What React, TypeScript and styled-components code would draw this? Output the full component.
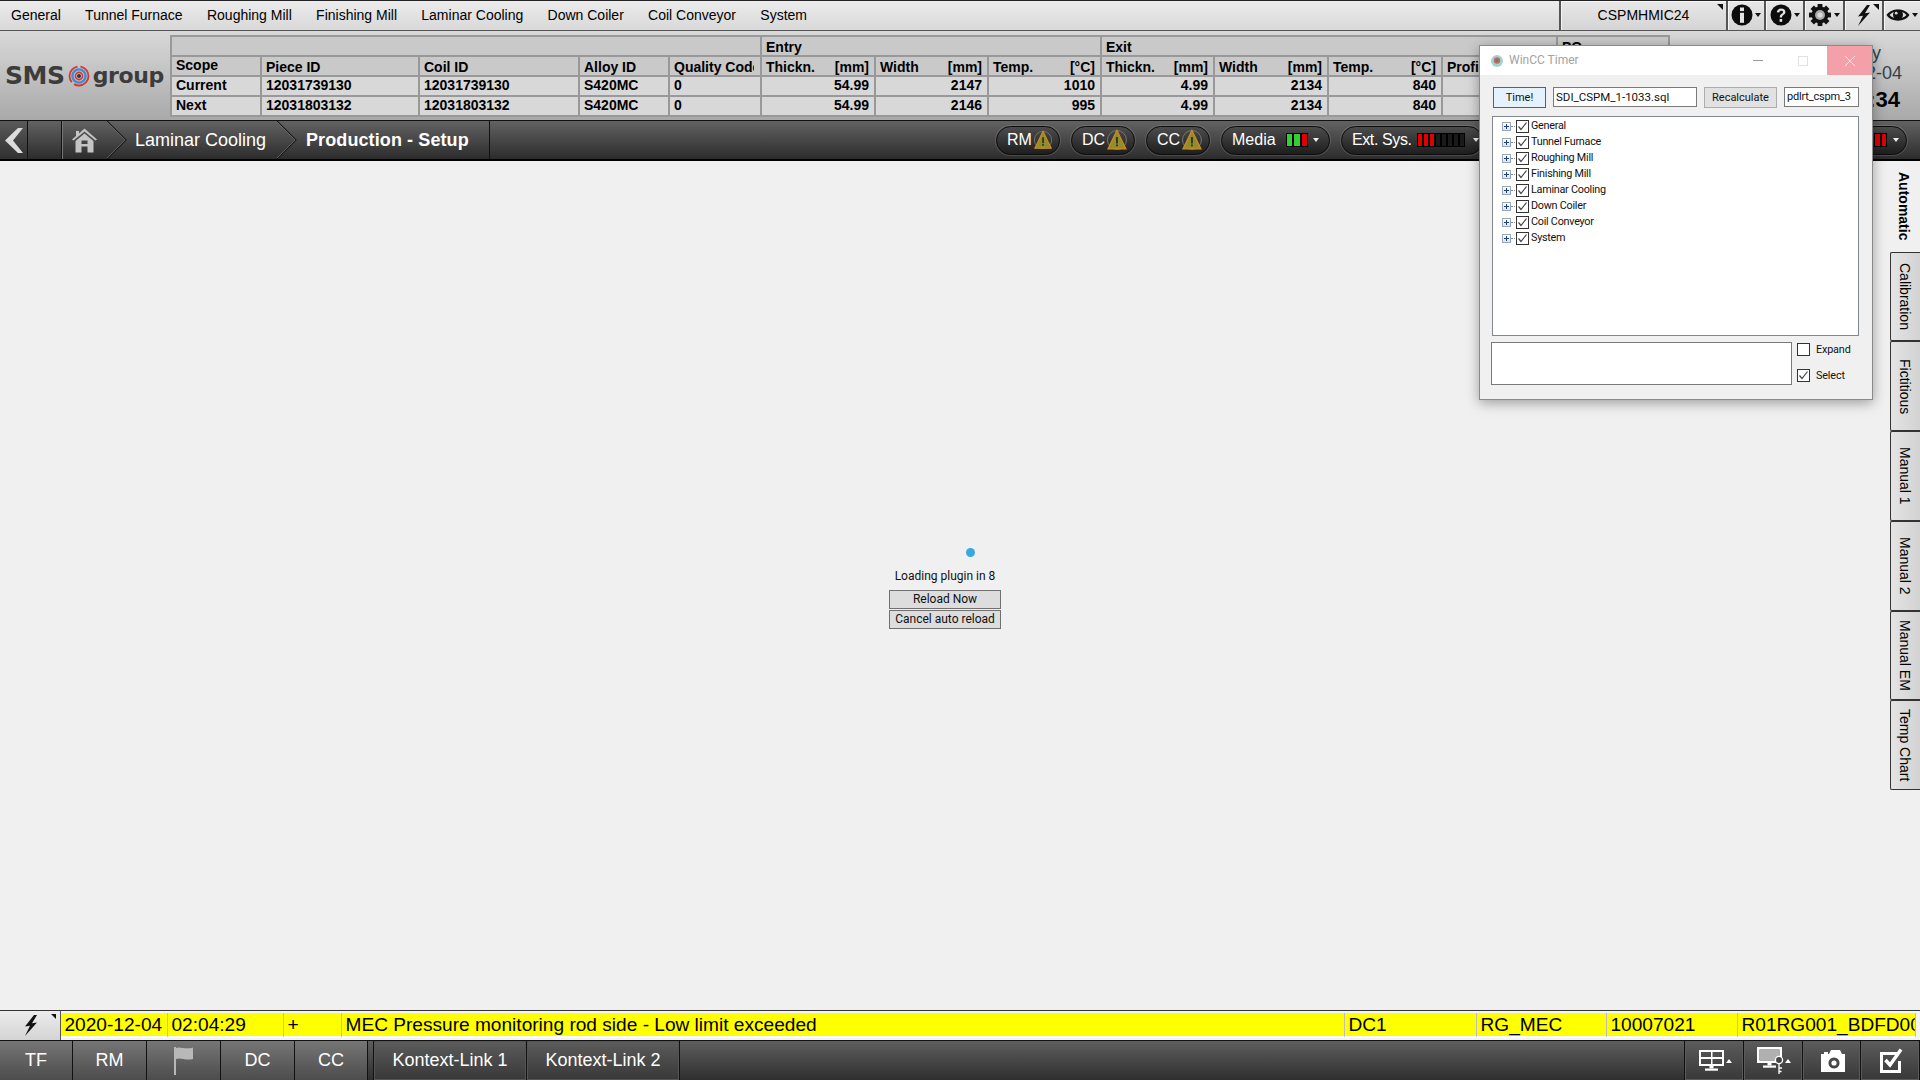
import React from "react"
import styled, { createGlobalStyle } from "styled-components"

const GlobalStyle = createGlobalStyle`
    html, body { margin: 0; padding: 0; background: #f0f0f0; }
    * { box-sizing: border-box; }
`

const Page = styled.div`
    position: relative;
    width: 1920px;
    height: 1080px;
    overflow: hidden;
    display: flex;
    flex-direction: column;
    font-family: "Liberation Sans", Arial, sans-serif;
    color: #000;
`

/* top menu */
const TopMenu = styled.div`
    height: 31px;
    flex: none;
    display: flex;
    align-items: stretch;
    border-top: 1px solid #222;
    border-bottom: 1px solid #555;
    background: linear-gradient(#ececec, #d8d8d8);
`
const MenuItems = styled.nav`
    flex: 1;
    display: flex;
    align-items: center;
    gap: 24.3px;
    padding: 0 0 2px 11px;
    font-size: 14px;
`
const MenuCell = styled.div<{ $w: number; $corner?: boolean }>`
    position: relative;
    width: ${p => p.$w}px;
    display: flex;
    align-items: center;
    justify-content: center;
    gap: 2px;
    padding-bottom: 1px;
    font-size: 14px;
    border-left: 2px solid #555;
    background: linear-gradient(#e8e8e8, #d4d4d4);
    box-shadow: inset 1px 1px 0 #f6f6f6;
    ${p => p.$corner && `
        &::after {
            content: "";
            position: absolute;
            top: 3px;
            right: 3px;
            border-top: 6px solid #111;
            border-left: 6px solid transparent;
        }
    `}
`
const Caret = styled.span<{ $color?: string; $up?: boolean; $pull?: number }>`
    display: inline-block;
    width: 0;
    height: 0;
    margin-left: ${p => p.$pull || 0}px;
    border-left: 3.5px solid transparent;
    border-right: 3.5px solid transparent;
    ${p => p.$up
        ? `border-bottom: 4px solid ${p.$color || "#111"};`
        : `border-top: 4px solid ${p.$color || "#111"};`}
`

/* header with logo, order table and clock */
const Header = styled.header`
    height: 89px;
    flex: none;
    display: flex;
    background: linear-gradient(#d9d9d9, #a9a9a9);
`
const Logo = styled.div`
    width: 170px;
    flex: none;
    display: flex;
    align-items: center;
    gap: 3px;
    padding: 0 0 0 5px;
    font-family: "DejaVu Sans", sans-serif;
    font-weight: 700;
    color: #3c3c3c;
`
const LogoWord = styled.span<{ $size: number }>`
    font-size: ${p => p.$size}px;
    letter-spacing: -0.4px;
`
const OrderTable = styled.table`
    table-layout: fixed;
    width: 1498px;
    height: 79px;
    margin-top: 4px;
    border-collapse: collapse;
    font-size: 14px;
    font-weight: 700;
`
const Col = styled.col<{ $w: number }>`
    width: ${p => p.$w}px;
`
const HeadCell = styled.th`
    height: 20px;
    padding: 0 4px;
    text-align: left;
    font-weight: 700;
    background: #c9c9c9;
    border: 2px solid #999;
    overflow: hidden;
    white-space: nowrap;
`
const GroupLabel = styled.div`
    padding-top: 2px;
`
const ScopeLabel = styled.div`
    padding-bottom: 2px;
`
const UnitHead = styled.div`
    display: flex;
    justify-content: space-between;
    padding: 2px 1px 0 0;
`
const LabelHead = styled.div`
    padding-top: 2px;
    margin-right: 2px;
    overflow: hidden;
`
const DataCell = styled.td<{ $right?: boolean }>`
    height: 20px;
    padding: 0 ${p => (p.$right ? 5 : 4)}px 2px 4px;
    background: #d8d8d8;
    border: 2px solid #999;
    text-align: ${p => (p.$right ? "right" : "left")};
    white-space: nowrap;
`
const Clock = styled.div`
    margin-left: auto;
    padding: 12px 18px 0 0;
    text-align: center;
    font-size: 18px;
    line-height: 20px;
    color: #34404c;
`
const ClockTime = styled.div`
    font-size: 22px;
    font-weight: 700;
    line-height: 34px;
    color: #000;
`

/* breadcrumb bar */
const NavBar = styled.div`
    height: 41px;
    flex: none;
    display: flex;
    align-items: stretch;
    border-top: 1px solid #111;
    border-bottom: 2px solid #000;
    background: linear-gradient(#626262, #2c2c2c);
    color: #fff;
    font-size: 18px;
`
const BackCell = styled.div`
    width: 28px;
    display: flex;
    align-items: center;
    padding-left: 5px;
    border-right: 1px solid #111;
    background: linear-gradient(#5a5a5a, #303030);
`
const BlankCell = styled.div`
    width: 34px;
    border-right: 1px solid #111;
`
const HomeCell = styled.div`
    width: 45px;
    display: flex;
    align-items: center;
    padding-left: 9px;
    border-left: 1px solid #777;
`
const Crumb = styled.div<{ $bold?: boolean; $w: number }>`
    width: ${p => p.$w}px;
    display: flex;
    align-items: center;
    padding-left: ${p => (p.$bold ? 9 : 8)}px;
    font-weight: ${p => (p.$bold ? 700 : 400)};
    letter-spacing: ${p => (p.$bold ? 0.1 : 0)}px;
    white-space: nowrap;
`
const CrumbEnd = styled.div`
    width: 1px;
    background: #111;
`
const Pills = styled.div`
    margin-left: auto;
    display: flex;
    align-items: center;
    gap: 11px;
    padding-right: 13px;
    font-size: 16px;
`
const Pill = styled.div<{ $w: number }>`
    width: ${p => p.$w}px;
    height: 29px;
    display: flex;
    align-items: center;
    padding: 0 7px 0 10px;
    gap: 2px;
    border: 1px solid #0c0c0c;
    border-radius: 15px;
    background: linear-gradient(#4c4c4c, #1e1e1e);
    box-shadow: 0 0 0 1px rgba(255, 255, 255, 0.12);
    white-space: nowrap;
`
const PillLabel = styled.span<{ $track?: number }>`
    letter-spacing: ${p => p.$track || 0}px;
`
const Leds = styled.div<{ $gap: number; $after: number }>`
    display: flex;
    margin-left: ${p => p.$gap}px;
    margin-right: ${p => p.$after}px;
`
const EndLeds = styled(Leds)`
    margin-left: auto;
`
const Led = styled.span<{ $color: string; $w: number }>`
    width: ${p => p.$w}px;
    height: 14px;
    background: ${p => p.$color};
    border: 1px solid #000;
`

/* main area */
const Body = styled.div`
    flex: 1;
    display: flex;
    min-height: 0;
    background: #f0f0f0;
`
const Content = styled.main`
    flex: 1;
    display: flex;
    flex-direction: column;
    align-items: center;
    justify-content: center;
    padding-top: 6px;
    font-family: Roboto, "Liberation Sans", sans-serif;
    font-size: 12px;
    color: #111;
`
const Dot = styled.div`
    width: 9px;
    height: 9px;
    margin-left: 50px;
    margin-bottom: 11px;
    border-radius: 50%;
    background: #38a8e0;
`
const PluginText = styled.div`
    line-height: 16px;
    margin-bottom: 6px;
`
const PluginButton = styled.button`
    display: block;
    width: 112px;
    height: 19px;
    padding: 0;
    margin: 0 0 1px;
    font: inherit;
    color: #111;
    background: #dddddd;
    border: 1px solid #707070;
`
const SideTabs = styled.aside`
    width: 30px;
    flex: none;
    display: flex;
    flex-direction: column;
`
const SideTab = styled.div<{ $active?: boolean }>`
    height: ${p => (p.$active ? 90.5 : 89.8)}px;
    display: flex;
    align-items: center;
    justify-content: center;
    padding-right: 2px;
    writing-mode: vertical-rl;
    font-size: 14px;
    font-weight: ${p => (p.$active ? 700 : 400)};
    ${p => !p.$active && `
        border: 1px solid #333;
        border-right: 0;
        border-radius: 2px 0 0 2px;
        background: linear-gradient(90deg, #e4e4e4, #d2d2d2);
    `}
`

/* alarm line */
const AlarmRow = styled.div`
    height: 30px;
    flex: none;
    display: grid;
    grid-template-columns: 61px 107px 116px 58px 1003px 132px 130px 131px 182px;
    border-top: 1px solid #333;
    background: #f4f4f4;
`
const AlarmBolt = styled.div`
    position: relative;
    display: flex;
    align-items: center;
    justify-content: center;
    background: linear-gradient(#ececec, #d4d4d4);
    border-right: 1px solid #555;
    &::after {
        content: "";
        position: absolute;
        top: 3px;
        right: 4px;
        border-top: 5px solid #111;
        border-left: 5px solid transparent;
    }
`
const AlarmCell = styled.div`
    margin: 2px 0 2px;
    padding-left: 3.5px;
    border-right: 1px solid #bdbdbd;
    border-bottom: 2px solid #fff;
    background: #ffff00;
    font-size: 19.1px;
    line-height: 23px;
    overflow: hidden;
    white-space: nowrap;
    &:last-child {
        margin-right: 4px;
    }
`

/* bottom bar */
const BottomBar = styled.footer`
    height: 40px;
    flex: none;
    display: flex;
    border-top: 1px solid #111;
    background: linear-gradient(#5e5e5e, #2f2f2f);
    color: #fff;
    font-size: 18px;
`
const PlantButton = styled.div<{ $w: number }>`
    width: ${p => p.$w}px;
    display: flex;
    align-items: center;
    justify-content: center;
    border-right: 1px solid #111;
    background: linear-gradient(#767676, #4c4c4c);
`
const LinkGroup = styled.div`
    display: flex;
    margin-left: 5px;
    border-left: 1px solid #111;
`
const LinkButton = styled.div<{ $w: number }>`
    width: ${p => p.$w}px;
    display: flex;
    align-items: center;
    justify-content: center;
    border-right: 1px solid #111;
    background: linear-gradient(#5c5c5c, #383838);
    box-shadow: inset 0 0 0 1px #555;
`
const ToolGroup = styled.div`
    margin-left: auto;
    display: flex;
    border-left: 1px solid #111;
`
const ToolButton = styled.div`
    width: 58.7px;
    display: flex;
    align-items: center;
    justify-content: center;
    gap: 2px;
    padding-left: 3px;
    border-right: 1px solid #111;
    background: linear-gradient(#5c5c5c, #383838);
    box-shadow: inset 0 0 0 1px #5a5a5a;
`

/* floating dialog */
const Dialog = styled.section`
    position: absolute;
    left: 1479px;
    top: 45px;
    width: 394px;
    height: 355px;
    display: flex;
    flex-direction: column;
    background: #f0f0f0;
    border: 1px solid #8a8a8a;
    box-shadow: 0 3px 12px rgba(0, 0, 0, 0.35);
    font-family: Roboto, "Liberation Sans", sans-serif;
    font-size: 11px;
    color: #111;
`
const TitleBar = styled.div`
    height: 29px;
    flex: none;
    display: flex;
    align-items: center;
    gap: 5px;
    padding-left: 10px;
    background: #fff;
    color: #a2a2a2;
    font-size: 12px;
`
const TitleText = styled.span`
    padding-bottom: 2px;
`
const WindowButtons = styled.div`
    margin-left: auto;
    align-self: stretch;
    display: flex;
    align-items: center;
`
const MinLine = styled.div`
    width: 10px;
    height: 1px;
    margin-right: 35px;
    background: #9a9a9a;
`
const MaxBox = styled.div`
    width: 10px;
    height: 10px;
    margin-right: 19px;
    border: 1px solid #e2e2e2;
`
const CloseButton = styled.div`
    align-self: stretch;
    width: 45px;
    display: flex;
    align-items: center;
    justify-content: center;
    background: #f4a0a8;
`
const ToolRow = styled.div`
    display: flex;
    align-items: flex-start;
    padding: 12px 12px 0 13px;
    gap: 7px;
`
const ActionButton = styled.button<{ $w: number; $primary?: boolean }>`
    width: ${p => p.$w}px;
    height: 21px;
    padding: 0;
    font: inherit;
    color: #111;
    background: ${p => (p.$primary ? "#e5f1fb" : "#e1e1e1")};
    border: 1px solid ${p => (p.$primary ? "#0078d7" : "#adadad")};
`
const TextBox = styled.div<{ $w: number; $size: number; $track?: number }>`
    width: ${p => p.$w}px;
    height: 20px;
    padding-left: 2px;
    line-height: 18px;
    font-size: ${p => p.$size}px;
    letter-spacing: ${p => p.$track || 0}px;
    background: #fff;
    border: 1px solid #7a7a7a;
    white-space: nowrap;
    overflow: hidden;
`
const TreeView = styled.div`
    height: 220px;
    margin: 8px 13px 0 12px;
    padding: 1px 0 0 9px;
    background: #fff;
    border: 1px solid #828790;
    font-size: 10.8px;
    letter-spacing: -0.25px;
`
const TreeRow = styled.div`
    height: 16px;
    display: flex;
    align-items: center;
    line-height: 16px;
`
const PlusBox = styled.span`
    position: relative;
    width: 9px;
    height: 9px;
    flex: none;
    border: 1px solid #9aa5b5;
    background: linear-gradient(#fff, #dfe3ea);
    margin-right: 5px;
    &::before {
        content: "";
        position: absolute;
        left: 1px;
        top: 3px;
        width: 5px;
        height: 1px;
        background: #1a3f8a;
    }
    &::after {
        content: "";
        position: absolute;
        left: 3px;
        top: 1px;
        width: 1px;
        height: 5px;
        background: #1a3f8a;
    }
`
const TreeDots = styled.span`
    width: 6px;
    margin-left: -5px;
    margin-right: -1px;
    border-top: 1px dotted #888;
`
const CheckBox = styled.span`
    width: 13px;
    height: 13px;
    flex: none;
    display: inline-flex;
    align-items: center;
    justify-content: center;
    background: #fff;
    border: 1px solid #333;
`
const TreeLabel = styled.span`
    margin-left: 2px;
`
const BottomRow = styled.div`
    display: flex;
    gap: 5px;
    margin: 6px 0 0 11px;
`
const NoteBox = styled.div`
    width: 301px;
    height: 43px;
    background: #fff;
    border: 1px solid #7a7a7a;
`
const Options = styled.div`
    display: flex;
    flex-direction: column;
    gap: 13px;
    padding-top: 1px;
    font-size: 10.8px;
    letter-spacing: -0.15px;
`
const OptionRow = styled.label`
    display: flex;
    align-items: center;
    gap: 6px;
    height: 13px;
`

const SwirlLogo = () => (
    <svg width="22" height="22" viewBox="0 0 22 22">
        <circle cx="11" cy="11" r="9.5" fill="none" stroke="#d8333a" strokeWidth="1.8" strokeDasharray="20 3" />
        <circle cx="11" cy="11" r="6.6" fill="none" stroke="#3d8fd0" strokeWidth="2.4" />
        <circle cx="11" cy="11" r="3.6" fill="none" stroke="#d8333a" strokeWidth="1.6" />
        <circle cx="11" cy="11" r="2" fill="#333" />
    </svg>
)

const Check = () => (
    <svg width="11" height="11" viewBox="0 0 11 11">
        <path d="M1.5 5.5 L4 8.5 L9.5 1.5" fill="none" stroke="#444" strokeWidth="1.2" />
    </svg>
)

const Bolt = () => (
    <svg width="15" height="21" viewBox="0 0 15 21">
        <path d="M11 0 L2 11.5 L7 10.8 L2 21 L14 7.5 L9 8.2 L14 0 Z" fill="#111" />
    </svg>
)

const InfoIcon = () => (
    <svg width="22" height="22" viewBox="0 0 22 22">
        <circle cx="11" cy="11" r="10.5" fill="#0c0c0c" />
        <rect x="9" y="3.5" width="4" height="3.6" fill="#e4e4e4" />
        <rect x="9" y="8.8" width="4" height="10" fill="#e4e4e4" />
    </svg>
)

const HelpIcon = () => (
    <svg width="22" height="22" viewBox="0 0 22 22">
        <circle cx="11" cy="11" r="10.5" fill="#0c0c0c" />
        <path d="M6.8 8.2 C7 3.4 15.4 3.4 15.4 8 C15.4 11 12 10.6 12 13.4 L9.8 13.4 C9.6 9.6 13 10 13 8 C13 6 9.4 6.2 9.2 8.6 Z" fill="#e4e4e4" />
        <rect x="9.6" y="15" width="2.6" height="2.8" fill="#e4e4e4" />
    </svg>
)

const GearIcon = () => (
    <svg width="24" height="24" viewBox="0 0 24 24">
        <g fill="#111">
            <circle cx="12" cy="12" r="8.4" />
            {[0, 45, 90, 135, 180, 225, 270, 315].map(a => (
                <rect key={a} x="9.6" y="1" width="4.8" height="5" transform={`rotate(${a} 12 12)`} />
            ))}
        </g>
        <circle cx="12" cy="12" r="5" fill="#a8a8a8" />
        <circle cx="12" cy="12" r="2.6" fill="#d8d8d8" />
    </svg>
)

const EyeIcon = () => (
    <svg width="24" height="16" viewBox="0 0 24 16">
        <path d="M0.5 8 C5 0.5 19 0.5 23.5 8 C19 15.5 5 15.5 0.5 8 Z M3.6 8 C7 12.6 17 12.6 20.4 8 C17 3.4 7 3.4 3.6 8 Z" fill="#111" fillRule="evenodd" />
        <circle cx="12" cy="7.8" r="5" fill="#111" />
        <circle cx="10.2" cy="6.2" r="1.4" fill="#ddd" />
    </svg>
)

const WarnIcon = () => (
    <svg width="20" height="22" viewBox="0 0 20 22">
        <circle cx="10" cy="11" r="9.5" fill="none" stroke="#777" strokeWidth="1" />
        <path d="M10 1.5 L19 20 L1 20 Z" fill="#8e8e2c" stroke="#d08a1e" strokeWidth="1.3" />
        <rect x="9.2" y="8" width="1.6" height="6.5" fill="#222" />
        <rect x="9.2" y="15.5" width="1.6" height="1.8" fill="#222" />
    </svg>
)

const BackIcon = () => (
    <svg width="18" height="25" viewBox="0 0 18 25">
        <path d="M13 0 H18 L8 12.5 L18 25 H13 L0 12.5 Z" fill="#dcdcdc" />
    </svg>
)

const HomeIcon = () => (
    <svg width="25" height="25" viewBox="0 0 25 25">
        <path d="M12.5 0.5 L25 11.5 L23.5 12.5 L12.5 3.5 L1.5 12.5 L0 11.5 L4 8 L4 3 L7 3 L7 5.4 Z" fill="#c4c4c4" />
        <path d="M12.5 5.5 L21.5 13 L21.5 24.5 L15.5 24.5 L15.5 18.5 L9.5 18.5 L9.5 24.5 L3.5 24.5 L3.5 13 Z M9.5 12.5 L9.5 16 L15.5 16 L15.5 12.5 Z" fill="#c4c4c4" fillRule="evenodd" />
    </svg>
)

const Chevron = ({ w }: { w: number }) => (
    <svg width={w} height="38" viewBox={`0 0 ${w} 38`} style={{ flex: "none" }}>
        <path d={`M0 0 L${w - 1} 19 L0 38`} fill="none" stroke="#1a1a1a" strokeWidth="1.2" />
        <path d={`M-1 0 L${w - 2} 19 L-1 38`} fill="none" stroke="#777" strokeWidth="0.7" />
    </svg>
)

const FlagIcon = () => (
    <svg width="22" height="30" viewBox="0 0 22 30">
        <rect x="1" y="1" width="2" height="28" fill="#b8b8b8" />
        <path d="M3 2 C8 0 11 4 20 1.5 L20 13 C12 15 8 11 3 13 Z" fill="#b8b8b8" />
    </svg>
)

const LayoutIcon = () => (
    <svg width="25" height="21" viewBox="0 0 25 21">
        <path fillRule="evenodd" fill="#fff" d="M0 0 H25 V16 H0 Z M2 2 V7 H12 V2 Z M13.5 2 V7 H23 V2 Z M2 9 V14 H12 V9 Z M13.5 9 V14 H23 V9 Z" />
        <rect x="10.5" y="16" width="4" height="2.5" fill="#fff" />
        <rect x="6" y="18.5" width="13" height="2.2" fill="#fff" />
    </svg>
)

const KeyScreenIcon = () => (
    <svg width="30" height="28" viewBox="0 0 30 28">
        <path fillRule="evenodd" fill="#fff" d="M0 0 H25 V16 H0 Z M2.5 2.5 V13.5 H22.5 V2.5 Z" />
        <rect x="2.5" y="2.5" width="20" height="11" fill="#b0b0b0" />
        <rect x="10.5" y="16" width="4" height="2.5" fill="#fff" />
        <rect x="6" y="18.5" width="13" height="2.2" fill="#fff" />
        <circle cx="22" cy="13" r="3.6" fill="#444" stroke="#fff" strokeWidth="1.3" />
        <path d="M22 16.5 V27 M22 21 H25 M22 24.5 H24.5" stroke="#fff" strokeWidth="1.3" fill="none" />
    </svg>
)

const CameraIcon = () => (
    <svg width="24" height="22" viewBox="0 0 24 22">
        <path fillRule="evenodd" fill="#fff" d="M0 4 H3 V2 H7 V4 H8 L10 0 H19 L21 4 H24 V22 H0 Z M13 7.5 A5.5 5.5 0 1 0 13.01 7.5 Z" />
        <circle cx="13" cy="13" r="2.6" fill="#fff" />
    </svg>
)

const TaskIcon = () => (
    <svg width="24" height="25" viewBox="0 0 24 25">
        <path fillRule="evenodd" fill="#fff" d="M0 4 H17 V7 H3 V22 H18 V13 H21 V25 H0 Z" />
        <path d="M5.5 12 L10 17 L21 1.5" fill="none" stroke="#fff" strokeWidth="3.4" />
    </svg>
)

const menuItems = ["General", "Tunnel Furnace", "Roughing Mill", "Finishing Mill", "Laminar Cooling", "Down Coiler", "Coil Conveyor", "System"]
const columnWidths = [90, 158, 160, 90, 92, 114, 113, 113, 113, 114, 114, 115, 112]
const unitHeads = [["Thickn.", "[mm]"], ["Width", "[mm]"], ["Temp.", "[°C]"], ["Thickn.", "[mm]"], ["Width", "[mm]"], ["Temp.", "[°C]"]]
const rows = [
    ["Current", "12031739130", "12031739130", "S420MC", "0", "54.99", "2147", "1010", "4.99", "2134", "840"],
    ["Next", "12031803132", "12031803132", "S420MC", "0", "54.99", "2146", "995", "4.99", "2134", "840"],
]
const sideTabs = ["Automatic", "Calibration", "Fictitious", "Manual 1", "Manual 2", "Manual EM", "Temp Chart"]
const alarmCells = ["2020-12-04", "02:04:29", "+", "MEC Pressure monitoring rod side - Low limit exceeded", "DC1", "RG_MEC", "10007021", "R01RG001_BDFD00"]

const ledColors = (on: string[], off: number) => [...on, ...Array(off).fill("#1a1a1a")]

const App: React.FC = () => {
    return (
        <Page>
            <GlobalStyle />
            <TopMenu>
                <MenuItems>
                    {menuItems.map(m => <span key={m}>{m}</span>)}
                </MenuItems>
                <MenuCell $w={167} $corner>CSPMHMIC24</MenuCell>
                <MenuCell $w={38}><InfoIcon /><Caret /></MenuCell>
                <MenuCell $w={39}><HelpIcon /><Caret /></MenuCell>
                <MenuCell $w={40}><GearIcon /><Caret /></MenuCell>
                <MenuCell $w={39} $corner><Bolt /></MenuCell>
                <MenuCell $w={38}><EyeIcon /><Caret /></MenuCell>
            </TopMenu>

            <Header>
                <Logo>
                    <LogoWord $size={25}>SMS</LogoWord>
                    <SwirlLogo />
                    <LogoWord $size={22}>group</LogoWord>
                </Logo>
                <OrderTable>
                    <colgroup>
                        {columnWidths.map((w, i) => <Col key={i} $w={w} />)}
                    </colgroup>
                    <thead>
                        <tr>
                            <HeadCell colSpan={5} />
                            <HeadCell colSpan={3}><GroupLabel>Entry</GroupLabel></HeadCell>
                            <HeadCell colSpan={4}><GroupLabel>Exit</GroupLabel></HeadCell>
                            <HeadCell><GroupLabel>PO</GroupLabel></HeadCell>
                        </tr>
                        <tr>
                            <HeadCell><ScopeLabel>Scope</ScopeLabel></HeadCell>
                            {["Piece ID", "Coil ID", "Alloy ID", "Quality Code"].map(h => (
                                <HeadCell key={h}><LabelHead>{h}</LabelHead></HeadCell>
                            ))}
                            {unitHeads.map(([label, unit], i) => (
                                <HeadCell key={i}><UnitHead><span>{label}</span><span>{unit}</span></UnitHead></HeadCell>
                            ))}
                            <HeadCell><LabelHead>Profile</LabelHead></HeadCell>
                            <HeadCell />
                        </tr>
                    </thead>
                    <tbody>
                        {rows.map(r => (
                            <tr key={r[0]}>
                                {r.map((v, i) => <DataCell key={i} $right={i > 4}>{v}</DataCell>)}
                                <DataCell />
                                <DataCell />
                            </tr>
                        ))}
                    </tbody>
                </OrderTable>
                <Clock>
                    <div>Friday</div>
                    <div>2020-12-04</div>
                    <ClockTime>02:04:34</ClockTime>
                </Clock>
            </Header>

            <NavBar>
                <BackCell><BackIcon /></BackCell>
                <BlankCell />
                <HomeCell><HomeIcon /></HomeCell>
                <Chevron w={20} />
                <Crumb $w={150}>Laminar Cooling</Crumb>
                <Chevron w={20} />
                <Crumb $w={192} $bold>Production - Setup</Crumb>
                <CrumbEnd />
                <Pills>
                    {["RM", "DC", "CC"].map(s => (
                        <Pill key={s} $w={64}>{s}<WarnIcon /></Pill>
                    ))}
                    <Pill $w={109}>
                        <PillLabel>Media</PillLabel>
                        <Leds $gap={8} $after={3}>
                            {ledColors(["#2fd02f", "#2fd02f", "#e00000"], 0).map((c, i) => <Led key={i} $color={c} $w={7.5} />)}
                        </Leds>
                        <Caret $color="#eee" />
                    </Pill>
                    <Pill $w={142}>
                        <PillLabel $track={-0.4}>Ext. Sys.</PillLabel>
                        <Leds $gap={3} $after={6}>
                            {ledColors(["#e00000", "#e00000", "#e00000"], 5).map((c, i) => <Led key={i} $color={c} $w={6} />)}
                        </Leds>
                        <Caret $color="#eee" />
                    </Pill>
                    <Pill $w={413}>
                        <EndLeds $gap={0} $after={4}>
                            {ledColors(["#e00000", "#e00000"], 0).map((c, i) => <Led key={i} $color={c} $w={6.5} />)}
                        </EndLeds>
                        <Caret $color="#eee" />
                    </Pill>
                </Pills>
            </NavBar>

            <Body>
                <Content>
                    <Dot />
                    <PluginText>Loading plugin in 8</PluginText>
                    <PluginButton>Reload Now</PluginButton>
                    <PluginButton>Cancel auto reload</PluginButton>
                </Content>
                <SideTabs>
                    {sideTabs.map((t, i) => <SideTab key={t} $active={i === 0}>{t}</SideTab>)}
                </SideTabs>
            </Body>

            <AlarmRow>
                <AlarmBolt><Bolt /></AlarmBolt>
                {alarmCells.map(c => <AlarmCell key={c}>{c}</AlarmCell>)}
            </AlarmRow>

            <BottomBar>
                <PlantButton $w={73}>TF</PlantButton>
                <PlantButton $w={74}>RM</PlantButton>
                <PlantButton $w={74}><FlagIcon /></PlantButton>
                <PlantButton $w={74}>DC</PlantButton>
                <PlantButton $w={73}>CC</PlantButton>
                <LinkGroup>
                    <LinkButton $w={153}>Kontext-Link 1</LinkButton>
                    <LinkButton $w={153}>Kontext-Link 2</LinkButton>
                </LinkGroup>
                <ToolGroup>
                    <ToolButton><LayoutIcon /><Caret $color="#fff" $up /></ToolButton>
                    <ToolButton><KeyScreenIcon /><Caret $color="#fff" $up $pull={-4} /></ToolButton>
                    <ToolButton><CameraIcon /></ToolButton>
                    <ToolButton><TaskIcon /></ToolButton>
                </ToolGroup>
            </BottomBar>

            <Dialog>
                <TitleBar>
                    <svg width="14" height="14" viewBox="0 0 14 14">
                        <circle cx="7" cy="7" r="6" fill="#9fd4cf" />
                        <circle cx="7" cy="6.5" r="3.2" fill="#c9695a" />
                        <circle cx="7" cy="6.5" r="1.4" fill="#4a7fa8" />
                    </svg>
                    <TitleText>WinCC Timer</TitleText>
                    <WindowButtons>
                        <MinLine />
                        <MaxBox />
                        <CloseButton>
                            <svg width="12" height="12" viewBox="0 0 12 12">
                                <path d="M1 1 L11 11 M11 1 L1 11" stroke="#fbe3e5" strokeWidth="1" />
                            </svg>
                        </CloseButton>
                    </WindowButtons>
                </TitleBar>
                <ToolRow>
                    <ActionButton $w={53} $primary>Time!</ActionButton>
                    <TextBox $w={144} $size={11.5}>SDI_CSPM_1-1033.sql</TextBox>
                    <ActionButton $w={73}>Recalculate</ActionButton>
                    <TextBox $w={75} $size={11} $track={-0.2}>pdlrt_cspm_3</TextBox>
                </ToolRow>
                <TreeView>
                    {menuItems.map(m => (
                        <TreeRow key={m}>
                            <PlusBox />
                            <TreeDots />
                            <CheckBox><Check /></CheckBox>
                            <TreeLabel>{m}</TreeLabel>
                        </TreeRow>
                    ))}
                </TreeView>
                <BottomRow>
                    <NoteBox />
                    <Options>
                        <OptionRow><CheckBox />Expand</OptionRow>
                        <OptionRow><CheckBox><Check /></CheckBox>Select</OptionRow>
                    </Options>
                </BottomRow>
            </Dialog>
        </Page>
    )
}

export default App
